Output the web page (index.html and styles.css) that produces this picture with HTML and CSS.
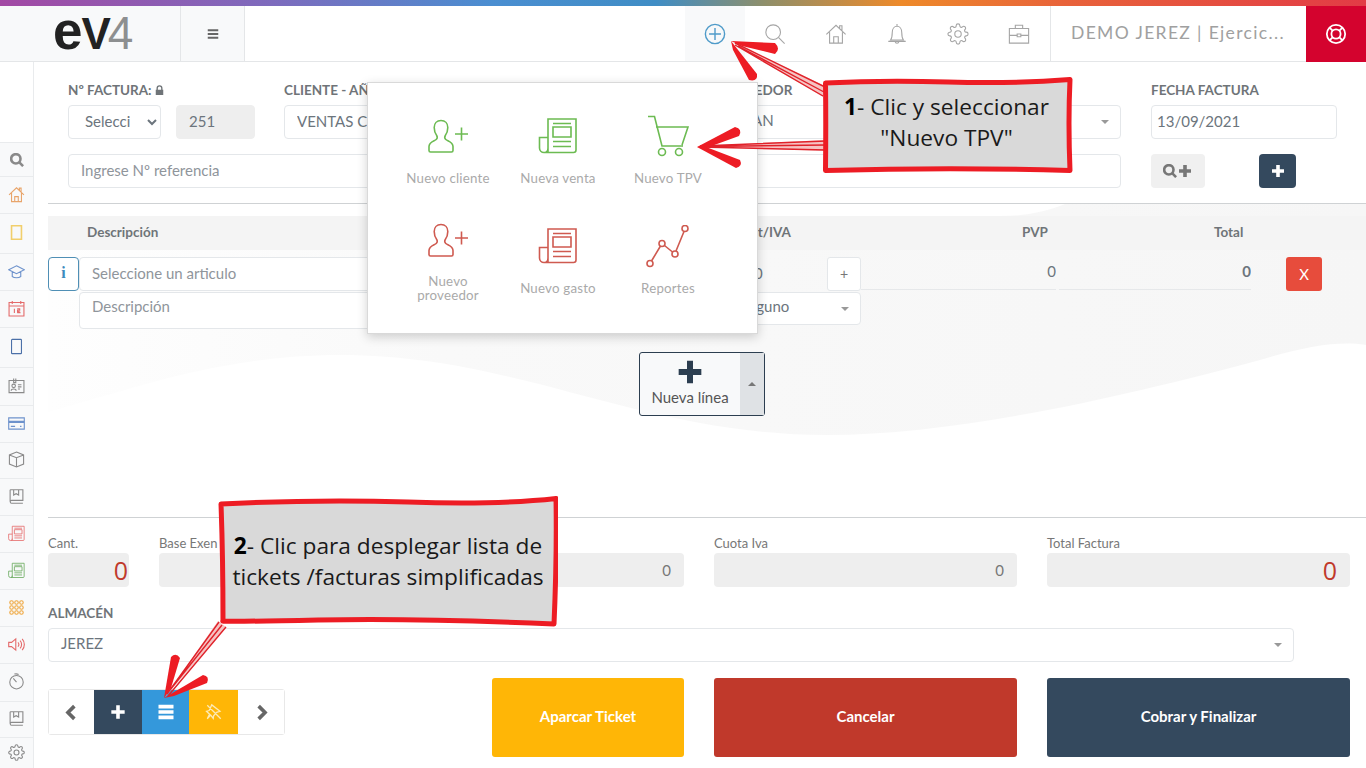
FILE: index.html
```html
<!DOCTYPE html>
<html lang="es">
<head>
    <meta charset="UTF-8">
    <meta name="viewport" content="width=device-width, initial-scale=1.0">
    <title>Nueva factura</title>
    <link rel="stylesheet" href="styles.css">
</head>
<body>
    <svg class="sprite" aria-hidden="true">
        <symbol id="i-search" viewBox="0 0 24 24"><circle cx="10" cy="10" r="8"/><path d="M16 16l6.5 6.5"/></symbol>
        <symbol id="i-home" viewBox="0 0 24 24"><path d="M1.500 12.500L12 2.500l10.500 10M5 10v12h14V10M9.500 22v-7h5v7M16 6V3h2.500v5.500"/></symbol>
        <symbol id="i-bell" viewBox="0 0 24 24"><path d="M12 1v2.500M5 18.500c1.500-2 1.800-4 1.800-8 0-4 2.200-7 5.200-7s5.200 3 5.200 7c0 4 .3 6 1.800 8zM2.500 20h19M10 20.500c.3 2 3.700 2 4 0"/></symbol>
        <symbol id="i-gear" viewBox="0 0 24 24"><circle cx="12" cy="12" r="3.500"/><path d="M19.400 15a1.650 1.650 0 0 0 .33 1.820l.06.06a2 2 0 0 1 0 2.830 2 2 0 0 1-2.830 0l-.06-.06a1.650 1.650 0 0 0-1.820-.33 1.650 1.650 0 0 0-1 1.510V21a2 2 0 0 1-2 2 2 2 0 0 1-2-2v-.09A1.650 1.650 0 0 0 9 19.400a1.650 1.650 0 0 0-1.820.33l-.06.06a2 2 0 0 1-2.830 0 2 2 0 0 1 0-2.830l.06-.06a1.650 1.650 0 0 0 .33-1.820 1.650 1.650 0 0 0-1.510-1H3a2 2 0 0 1-2-2 2 2 0 0 1 2-2h.09A1.650 1.650 0 0 0 4.600 9a1.650 1.650 0 0 0-.33-1.820l-.06-.06a2 2 0 0 1 0-2.830 2 2 0 0 1 2.830 0l.06.06a1.650 1.650 0 0 0 1.820.33H9a1.650 1.650 0 0 0 1-1.510V3a2 2 0 0 1 2-2 2 2 0 0 1 2 2v.09a1.650 1.650 0 0 0 1 1.510 1.650 1.650 0 0 0 1.820-.33l.06-.06a2 2 0 0 1 2.830 0 2 2 0 0 1 0 2.830l-.06.06a1.650 1.650 0 0 0-.33 1.820V9a1.650 1.650 0 0 0 1.510 1H21a2 2 0 0 1 2 2 2 2 0 0 1-2 2h-.09a1.650 1.650 0 0 0-1.510 1z"/></symbol>
        <symbol id="i-case" viewBox="0 0 24 24"><rect x="1.500" y="6" width="21" height="16"/><path d="M8 6V2.500h8V6M1.500 13.500H10M14 13.500h8.500"/><rect x="10" y="12" width="4" height="3"/></symbol>
        <symbol id="i-buoy" viewBox="0 0 24 24"><circle cx="12" cy="12" r="10"/><circle cx="12" cy="12" r="5"/><path d="M5 5l3.500 3.500M19 5l-3.500 3.500M5 19l3.500-3.500M19 19l-3.500-3.500"/></symbol>
        <symbol id="i-add-circle" viewBox="0 0 24 24"><circle cx="12" cy="12" r="10.500"/><path d="M12 5.500v13M5.500 12h13"/></symbol>
        <symbol id="i-plus" viewBox="0 0 24 24"><path d="M12 4v16M4 12h16"/></symbol>
        <symbol id="i-list" viewBox="0 0 24 24"><path d="M3 5.500h18M3 12h18M3 18.500h18"/></symbol>
        <symbol id="i-left" viewBox="0 0 24 24"><path d="M16 3l-9 9 9 9"/></symbol>
        <symbol id="i-right" viewBox="0 0 24 24"><path d="M8 3l9 9-9 9"/></symbol>
        <symbol id="i-pin" viewBox="0 0 24 24"><path d="M3 3l18 18M9 2.500l11 8.500-4.500 1.500-4 4.500-.5 3.500-3.500-4.500-4.500 5 3-6-4-4 3.500-1z"/></symbol>
        <symbol id="i-note" viewBox="0 0 24 24"><rect x="5" y="2.500" width="14" height="19"/></symbol>
        <symbol id="i-cap" viewBox="0 0 24 24"><path d="M12 4L23 9.500 12 15 1 9.500zM6 12v7c3 2.500 9 2.500 12 0v-7"/></symbol>
        <symbol id="i-cal" viewBox="0 0 24 24"><rect x="1.500" y="3.500" width="21" height="19"/><path d="M1.500 8.500h21M6 1.500v4M18 1.500v4M9 12.500v6M13 12.500h3.500v2h-3v2.300c1.500-.8 3.500-.5 3.500 1.200H13"/></symbol>
        <symbol id="i-tablet" viewBox="0 0 24 24"><rect x="5" y="2" width="14" height="20" rx="1"/></symbol>
        <symbol id="i-id" viewBox="0 0 24 24"><rect x="1.500" y="5" width="21" height="17"/><path d="M8 2v6h3V2M14 11h5M14 14h5M14 17h3M4.500 19.500c0-3.500 7-3.500 7 0"/><circle cx="8" cy="12.500" r="2.500"/></symbol>
        <symbol id="i-card" viewBox="0 0 24 24"><rect x="1" y="4" width="22" height="16"/><path d="M1 9h22M1 10.500h22M4 16h6M17 16h2"/></symbol>
        <symbol id="i-box" viewBox="0 0 24 24"><path d="M12 1.500l10 4v13l-10 4-10-4v-13zM2 5.500l10 4 10-4M12 9.500v13"/></symbol>
        <symbol id="i-book" viewBox="0 0 24 24"><path d="M3 2.500h18v15H5c-2.500 0-2.500 4 0 4h16M3 19V2.500M8 2.500V10l3.500-2 3.500 2V2.500"/></symbol>
        <symbol id="i-news" viewBox="0 0 40 38"><path d="M10 35V2h28v31a2.500 2.500 0 0 1-2.500 2.500H6A4.500 4.500 0 0 1 1.500 31V20.500H10M10 31c0 2.500-1.500 4.500-3.500 4.500"/><rect x="15" y="10" width="18" height="10"/><path d="M15 6.500h18M15 24.500h18M15 29.500h18"/></symbol>
        <symbol id="i-dots" viewBox="0 0 24 24"><circle cx="5" cy="5" r="2.500"/><circle cx="12" cy="5" r="2.500"/><circle cx="19" cy="5" r="2.500"/><circle cx="5" cy="12" r="2.500"/><circle cx="12" cy="12" r="2.500"/><circle cx="19" cy="12" r="2.500"/><circle cx="5" cy="19" r="2.500"/><circle cx="12" cy="19" r="2.500"/><circle cx="19" cy="19" r="2.500"/></symbol>
        <symbol id="i-sound" viewBox="0 0 24 24"><path d="M1 9h4l6-5v16l-6-5H1zM14 9a4 4 0 0 1 0 6M17 6.500a8 8 0 0 1 0 11M20 4a12 12 0 0 1 0 16"/></symbol>
        <symbol id="i-timer" viewBox="0 0 24 24"><circle cx="12" cy="13" r="9.500"/><path d="M12 13L7.500 7.500M9 1.500c2-.5 4-.5 6 .5"/></symbol>
        <symbol id="i-user" viewBox="0 0 44 36"><path d="M13 1.500c-4.200 0-6.800 3-6.800 7 0 3 1 6 2.500 8 .7 1.200.6 3-.5 4-1.500 1.500-7.200 2.200-7.200 7v4c0 1 .5 1.500 1.500 1.500h21c1 0 1.500-.5 1.500-1.500v-4c0-4.800-5.700-5.500-7.200-7-1.100-1-1.200-2.800-.5-4 1.500-2 2.500-5 2.500-8 0-4-2.600-7-6.800-7zM33.500 8.500v13M27 15h13"/></symbol>
        <symbol id="i-cart" viewBox="0 0 42 44"><path d="M1 1.500h6.500L15 31h21M9 12h32l-6 18"/><circle cx="15" cy="37" r="3.500"/><circle cx="32" cy="37" r="3.500"/></symbol>
        <symbol id="i-chart" viewBox="0 0 44 44"><circle cx="4" cy="38.500" r="3"/><circle cx="16" cy="18.500" r="3"/><circle cx="29" cy="29" r="3"/><circle cx="39" cy="3.500" r="3"/><path d="M5.500 36l9-15M18.500 20.500l8 6.500M30 26l8-19.500"/></symbol>
    </svg>

    <div class="page">
        <svg class="wave" viewBox="0 0 1366 768" aria-hidden="true">
            <defs>
                <linearGradient id="wave-fade">
                    <stop offset="0" stop-color="#fefefe"/>
                    <stop offset=".3" stop-color="#f9f9f9"/>
                    <stop offset="1" stop-color="#f6f6f6"/>
                </linearGradient>
            </defs>
            <path fill="url(#wave-fade)" d="M48 216H1000C1025 216 1045 212 1065 204H1366V345C1340 341 1310 345 1260 360C1130 395 960 435 827 435C640 435 520 355 340 355C220 355 130 390 48 412Z"/>
        </svg>

        <div class="rainbow"></div>

        <header class="topnav">
            <a class="brand"><span class="logo-e">e</span><span class="logo-v">V</span><span class="logo-4">4</span></a>
            <a class="nav-toggle"><svg class="ic ic-toggle"><use href="#i-list"/></svg></a>
            <div class="nav-spacer"></div>
            <a class="nav-item is-active"><svg class="ic ic-add"><use href="#i-add-circle"/></svg></a>
            <a class="nav-item"><svg class="ic"><use href="#i-search"/></svg></a>
            <a class="nav-item"><svg class="ic"><use href="#i-home"/></svg></a>
            <a class="nav-item"><svg class="ic"><use href="#i-bell"/></svg></a>
            <a class="nav-item"><svg class="ic"><use href="#i-gear"/></svg></a>
            <a class="nav-item"><svg class="ic"><use href="#i-case"/></svg></a>
            <div class="nav-user">DEMO JEREZ | Ejercic...</div>
            <a class="nav-help"><svg class="ic ic-buoy"><use href="#i-buoy"/></svg></a>
        </header>

        <div class="layout">
            <aside class="sidebar">
                <a class="side-item side-search"><svg class="ic ic-solid c-grey"><use href="#i-search"/></svg></a>
                <a class="side-item"><svg class="ic c-orange"><use href="#i-home"/></svg></a>
                <a class="side-item"><svg class="ic c-yellow"><use href="#i-note"/></svg></a>
                <a class="side-item"><svg class="ic c-blue"><use href="#i-cap"/></svg></a>
                <a class="side-item"><svg class="ic c-red"><use href="#i-cal"/></svg></a>
                <a class="side-item"><svg class="ic c-navy"><use href="#i-tablet"/></svg></a>
                <a class="side-item"><svg class="ic c-grey"><use href="#i-id"/></svg></a>
                <a class="side-item"><svg class="ic c-blue"><use href="#i-card"/></svg></a>
                <a class="side-item"><svg class="ic c-grey"><use href="#i-box"/></svg></a>
                <a class="side-item"><svg class="ic c-grey"><use href="#i-book"/></svg></a>
                <a class="side-item"><svg class="ic ic-fine c-red"><use href="#i-news"/></svg></a>
                <a class="side-item"><svg class="ic ic-fine c-green"><use href="#i-news"/></svg></a>
                <a class="side-item"><svg class="ic c-amber"><use href="#i-dots"/></svg></a>
                <a class="side-item"><svg class="ic c-red"><use href="#i-sound"/></svg></a>
                <a class="side-item"><svg class="ic c-grey"><use href="#i-timer"/></svg></a>
                <a class="side-item"><svg class="ic c-grey"><use href="#i-book"/></svg></a>
                <a class="side-item"><svg class="ic c-grey"><use href="#i-gear"/></svg></a>
            </aside>

            <main class="content">
                <section class="invoice-head">
                    <div class="col">
                        <label class="field-label">Nº FACTURA: <svg class="lock" viewBox="0 0 12 13"><path d="M2 6V4a4 4 0 0 1 8 0v2h1v7H1V6zm1.800 0h4.400V4a2.200 2.200 0 0 0-4.400 0z"/></svg></label>
                        <div class="factura-inputs">
                            <select class="form-control serie"><option>Seleccione</option></select>
                            <input class="form-control numero" value="251" disabled>
                        </div>
                    </div>
                    <div class="col">
                        <label class="field-label">CLIENTE - AÑADIR</label>
                        <input class="form-control" value="VENTAS CONTADO">
                    </div>
                    <div class="col">
                        <label class="field-label label-seller">VENDEDOR</label>
                        <div class="form-control select2">JUAN<span class="caret"></span></div>
                    </div>
                    <div class="col col-last">
                        <label class="field-label">FECHA FACTURA</label>
                        <input class="form-control date" value="13/09/2021">
                    </div>
                    <div class="col col-wide">
                        <input class="form-control" placeholder="Ingrese Nº referencia">
                    </div>
                    <div class="col col-last head-actions">
                        <button class="btn btn-light"><svg class="ic ic-solid ic-q"><use href="#i-search"/></svg><svg class="ic ic-thick ic-p"><use href="#i-plus"/></svg></button>
                        <button class="btn btn-dark"><svg class="ic ic-thick"><use href="#i-plus"/></svg></button>
                    </div>
                </section>

                <section class="lines">
                    <div class="lines-head">
                        <span class="th-desc">Descripción</span>
                        <span class="th-iva">Dct/IVA</span>
                        <span class="th-pvp">PVP</span>
                        <span class="th-total">Total</span>
                    </div>
                    <div class="line-row">
                        <button class="btn-info">i</button>
                        <div class="line-desc">
                            <input class="form-control" placeholder="Seleccione un articulo">
                            <input class="form-control desc-text" placeholder="Descripción">
                        </div>
                        <div class="line-iva">
                            <div class="iva-top">
                                <input class="form-control" value="0">
                                <button class="btn-plus">+</button>
                            </div>
                            <div class="form-control select2 iva-select">Ninguno<span class="caret"></span></div>
                        </div>
                        <input class="under-input line-pvp" value="0">
                        <input class="under-input line-total" value="0">
                        <button class="btn-remove">X</button>
                    </div>
                    <div class="add-line">
                        <button class="btn-add">
                            <span class="add-main"><svg class="ic ic-add-line"><use href="#i-plus"/></svg>Nueva línea</span>
                            <span class="add-drop"><span class="caret-up"></span></span>
                        </button>
                    </div>
                </section>

                <section class="totals">
                    <div class="totals-grid">
                        <div class="totals-first">
                            <div>
                                <label class="small-label">Cant.</label>
                                <div class="total-box is-big is-tight">0</div>
                            </div>
                            <div>
                                <label class="small-label">Base Exen</label>
                                <div class="total-box"></div>
                            </div>
                        </div>
                        <div>
                            <label class="small-label"></label>
                            <div class="total-box">0</div>
                        </div>
                        <div>
                            <label class="small-label">Cuota Iva</label>
                            <div class="total-box">0</div>
                        </div>
                        <div>
                            <label class="small-label">Total Factura</label>
                            <div class="total-box is-big">0</div>
                        </div>
                    </div>
                    <label class="field-label almacen-label">ALMACÉN</label>
                    <div class="form-control select2 almacen">JEREZ<span class="caret"></span></div>
                    <div class="totals-grid actions">
                        <div class="ticket-nav">
                            <button class="tn-btn tn-prev"><svg class="ic ic-thick"><use href="#i-left"/></svg></button>
                            <button class="tn-btn tn-dark"><svg class="ic ic-thick"><use href="#i-plus"/></svg></button>
                            <button class="tn-btn tn-blue"><svg class="ic ic-thick"><use href="#i-list"/></svg></button>
                            <button class="tn-btn tn-amber"><svg class="ic ic-pin"><use href="#i-pin"/></svg></button>
                            <button class="tn-btn tn-next"><svg class="ic ic-thick"><use href="#i-right"/></svg></button>
                        </div>
                        <button class="btn-big big-amber">Aparcar Ticket</button>
                        <button class="btn-big big-red">Cancelar</button>
                        <button class="btn-big big-navy">Cobrar y Finalizar</button>
                    </div>
                </section>
            </main>
        </div>

        <!-- quick menu open under the + button -->
        <div class="quick-menu">
            <a class="quick-item c-ok"><svg class="quick-ic ic-user"><use href="#i-user"/></svg><span>Nuevo cliente</span></a>
            <a class="quick-item c-ok"><svg class="quick-ic ic-news"><use href="#i-news"/></svg><span>Nueva venta</span></a>
            <a class="quick-item c-ok"><svg class="quick-ic ic-cart"><use href="#i-cart"/></svg><span>Nuevo TPV</span></a>
            <a class="quick-item c-bad"><svg class="quick-ic ic-user"><use href="#i-user"/></svg><span class="two-lines">Nuevo proveedor</span></a>
            <a class="quick-item c-bad"><svg class="quick-ic ic-news"><use href="#i-news"/></svg><span>Nuevo gasto</span></a>
            <a class="quick-item c-bad"><svg class="quick-ic ic-chart"><use href="#i-chart"/></svg><span>Reportes</span></a>
        </div>

        <!-- tutorial notes drawn on top of the screenshot -->
        <svg class="arrows" viewBox="0 0 1366 768" aria-hidden="true">
            <g class="arrow-pale">
                <path d="M825 86L732 42 823 97Z"/>
                <path d="M826 140L698 146 826 151Z"/>
                <path d="M218 621L165 697 226 627Z"/>
            </g>
            <g class="arrow-lines">
                <path d="M825 87L735 43M823 96L735 45M824 92L738 46"/>
                <path d="M826 141L700 146M826 150L700 147M826 145L705 146.500"/>
                <path d="M219 622L167 694M226 627L168 696M222 625L170 690"/>
            </g>
            <g class="arrow-fill">
                <path d="M731 41L775 43Q781 49 775 54L742 46Z"/>
                <path d="M731 41L757 74Q758 82 749 80L733 50Z"/>
                <path d="M697 147L735 127Q743 129 739 136L706 148Z"/>
                <path d="M697 147L706 147L740 160Q743 166 736 168Z"/>
                <path d="M164 698L171 657Q176 652 180 658L171 688Z"/>
                <path d="M164 698L203 675Q210 676 207 683L174 696Z"/>
            </g>
        </svg>

        <div class="callout callout-one">
            <svg class="callout-bg" viewBox="0 0 250 96" preserveAspectRatio="none"><path d="M2.500 6Q60 3 125 5T247 2.500Q245 45 247 93.500Q130 90 2.500 93.500Q3 45 2.500 6Z"/></svg>
            <p><b>1</b>- Clic y seleccionar<br>"Nuevo TPV"</p>
        </div>
        <div class="callout callout-two">
            <svg class="callout-bg" viewBox="0 0 340 131" preserveAspectRatio="none"><path d="M3 8Q100 3 190 6T338 2.500Q339 60 336 128Q200 122 100 124T5 125Q5 60 3 8Z"/></svg>
            <p><b>2</b>- Clic para desplegar lista de<br>tickets /facturas simplificadas</p>
        </div>
    </div>
</body>
</html>
```

FILE: styles.css
```css
* {
    box-sizing: border-box;
}
html, body {
    margin: 0;
    height: 768px;
    overflow: hidden;
}
body {
    font-family: Lato, "Open Sans", sans-serif;
    font-size: 15px;
    color: #6c757d;
    background: #fff;
}
.sprite {
    display: none;
}
symbol * {
    vector-effect: non-scaling-stroke;
}
.ic {
    width: 20px;
    height: 20px;
    fill: none;
    stroke: currentColor;
    stroke-width: 1.1;
    display: block;
}
.ic-solid {
    stroke-width: 2.6;
}
.ic-thick {
    stroke-width: 3.6;
}
.ic-fine {
    stroke-width: .8;
}
.page {
    position: relative;
    width: 1366px;
    height: 768px;
    overflow: hidden;
}
.wave {
    position: absolute;
    left: 0;
    top: 0;
    width: 1366px;
    height: 768px;
}

/* top */
.rainbow {
    position: relative;
    height: 6px;
    background: linear-gradient(to right, #a349a4 0%, #7d6bbd 20%, #4a8ed1 36%, #3f8dc5 48%, #8f8f6a 56%, #ee8a2a 66%, #e8623a 78%, #e23b46 100%);
}
.topnav {
    position: relative;
    display: flex;
    height: 56px;
    background: #fff;
    border-bottom: 1px solid #e4e6e8;
}
.brand {
    width: 180px;
    background: #f8f9fa;
    padding: 0 0 0 53px;
    font-family: "Liberation Sans", Arial, sans-serif;
    line-height: 50px;
    white-space: nowrap;
}
.logo-e {
    color: #222;
    font-weight: 700;
    font-size: 53px;
    letter-spacing: -1px;
}
.logo-v {
    color: #222;
    font-weight: 700;
    font-size: 44px;
    letter-spacing: -3px;
}
.logo-4 {
    color: #8d8f90;
    font-size: 46px;
}
.nav-toggle {
    width: 65px;
    display: flex;
    align-items: center;
    justify-content: center;
    background: #f8f9fa;
    border-left: 1px solid #e4e6e8;
    border-right: 1px solid #e4e6e8;
    color: #666;
}
.ic-toggle {
    width: 14px;
    height: 14px;
    stroke-width: 2;
}
.nav-spacer {
    flex: 1;
}
.nav-item {
    width: 61px;
    padding-right: 1px;
    display: flex;
    align-items: center;
    justify-content: center;
    color: #a5a5a5;
}
.nav-item .ic {
    width: 22px;
    height: 22px;
}
.nav-item.is-active {
    width: 60px;
    background: #f8f9fa;
    color: #4f9bc9;
}
.nav-item .ic-add {
    stroke-width: 1.4;
}
.nav-user {
    width: 256px;
    border-left: 1px solid #e4e6e8;
    padding-left: 20px;
    font-size: 17.500px;
    line-height: 54px;
    letter-spacing: 1.350px;
    color: #a0a0a0;
    white-space: nowrap;
}
.nav-help {
    width: 60px;
    margin-bottom: -1px;
    display: flex;
    align-items: center;
    justify-content: center;
    background: #d4032e;
    color: #fff;
}
.ic-buoy {
    width: 22px;
    height: 22px;
    stroke-width: 1.8;
}

/* left menu */
.layout {
    position: relative;
    display: flex;
    height: 706px;
}
.sidebar {
    width: 34px;
    flex: none;
    border-right: 1px solid #e9ebed;
    padding-top: 80px;
    display: grid;
    grid-template-rows: 34px 37px 40px 37px 37px 40px 38px 37px 36px 37px 37px 37px 37px 37px 38px 36px 31px;
}
.side-item {
    display: flex;
    align-items: center;
    justify-content: center;
    padding-bottom: 2px;
    background: #f8f9fa;
    border-top: 1px solid #e9ebed;
}
.side-item .ic {
    width: 17px;
    height: 17px;
}
.side-search {
    padding: 0;
}
.side-item .ic-solid {
    width: 14px;
    height: 14px;
}
.side-item .c-yellow {
    stroke-width: 1.6;
}
.c-grey { color: #8a8a8a; }
.c-orange { color: #e8a56b; }
.c-yellow { color: #f1cf6c; }
.c-blue { color: #6d92cc; }
.c-red { color: #e46a6a; }
.c-navy { color: #4b70a8; }
.c-green { color: #67a85a; }
.c-amber { color: #efa63c; }

/* main */
.content {
    flex: 1;
    padding-left: 14px;
}
.invoice-head {
    display: grid;
    grid-template-columns: 216px 438px 429px 186px;
    row-gap: 15px;
    margin-left: 20px;
    padding-top: 21px;
}
.col {
    padding-right: 30px;
    min-width: 0;
}
.col-last {
    padding-right: 0;
}
.col-wide {
    grid-column: span 3;
}
.field-label {
    display: block;
    height: 22px;
    font-size: 13.500px;
    line-height: 15px;
    font-weight: 700;
    color: #6f7478;
}
.label-seller {
    margin-left: -5px;
}
.lock {
    width: 9px;
    height: 10px;
    fill: #6f7478;
}
.form-control {
    display: block;
    width: 100%;
    height: 34px;
    padding: 0 12px 2px;
    font-family: inherit;
    font-size: 15px;
    line-height: 28px;
    color: #6c757d;
    background: #fff;
    border: 1px solid #e4e7ea;
    border-radius: 4px;
    outline: none;
}
.form-control::placeholder {
    color: #8f959b;
    opacity: 1;
}
.factura-inputs {
    display: flex;
    gap: 15px;
}
.serie {
    width: 93px;
    flex: none;
    padding: 0 14px 2px 12px;
}
.numero {
    width: 79px;
    flex: none;
    background: #eee;
    border-color: #eee;
}
.date {
    padding: 0 5px 2px;
}
.select2 {
    position: relative;
}
.caret {
    position: absolute;
    right: 11px;
    top: 14px;
    border: 4px solid transparent;
    border-top-color: #999;
    border-bottom: 0;
}
.head-actions {
    display: flex;
}
.btn {
    height: 34px;
    padding: 0;
    border: 0;
    border-radius: 4px;
    display: flex;
    align-items: center;
    justify-content: center;
}
.btn-light {
    width: 54px;
    margin-right: 54px;
    background: #f0f0f0;
    color: #777;
}
.btn-light .ic-q {
    width: 14px;
    height: 14px;
}
.btn-light .ic-p {
    width: 18px;
    height: 18px;
    margin-left: -1px;
}
.btn-dark {
    width: 37px;
    background: #34495e;
    color: #fff;
}
.btn-dark .ic {
    width: 18px;
    height: 18px;
}

/* invoice lines */
.lines {
    position: relative;
    margin-top: 15px;
    border-top: 1px solid #cfd2d4;
    padding-top: 12px;
}
.lines-head {
    position: relative;
    height: 34px;
    background: #f4f4f4;
    font-size: 13.500px;
    font-weight: 700;
    line-height: 32px;
    color: #6f7478;
}
.lines-head span {
    position: absolute;
    top: 0;
}
.th-desc { left: 39px; }
.th-iva { left: 693px; }
.th-pvp { left: 974px; }
.th-total { left: 1166px; }
.line-row {
    display: flex;
    margin-top: 7px;
    align-items: flex-start;
}
.btn-info {
    width: 31px;
    height: 34px;
    flex: none;
    padding: 0 0 2px;
    background: #fff;
    border: 1px solid #4f8fb5;
    border-radius: 4px;
    color: #3d8bbd;
    font-family: "Liberation Serif", serif;
    font-weight: 700;
    font-size: 16px;
}
.line-desc {
    width: 621px;
    flex: none;
    margin-right: 20px;
}
.desc-text {
    height: 37px;
    margin-top: 1px;
    line-height: 26px;
    padding-bottom: 9px;
}
.line-iva {
    width: 141px;
    flex: none;
}
.iva-top {
    display: flex;
    height: 34px;
}
.iva-top .form-control {
    width: 107px;
    background: transparent;
    border-color: transparent;
    padding-left: 33px;
}
.btn-plus {
    width: 34px;
    height: 34px;
    padding: 0;
    background: #fff;
    border: 1px solid #e4e7ea;
    border-radius: 3px;
    font-size: 14px;
    color: #777;
}
.iva-select {
    height: 33px;
    margin-top: 1px;
    line-height: 26px;
}
.under-input {
    width: 192px;
    height: 33px;
    flex: none;
    padding: 0 0 4px;
    background: transparent;
    border: 0;
    border-bottom: 1px solid #e6e8ea;
    font-family: inherit;
    font-size: 15px;
    color: #6c757d;
    text-align: right;
    outline: none;
}
.line-pvp {
    width: 195px;
    margin-right: 3px;
}
.line-total {
    padding-right: 0;
    font-weight: 700;
}
.btn-remove {
    width: 36px;
    height: 34px;
    margin-left: 35px;
    padding: 0;
    background: #e74c3c;
    border: 0;
    border-radius: 3px;
    color: #fff;
    font-family: inherit;
    font-size: 15px;
}
.add-line {
    display: flex;
    justify-content: center;
    margin-top: 23px;
    padding-right: 10px;
}
.btn-add {
    display: flex;
    width: 126px;
    height: 64px;
    padding: 0;
    background: #f8f9fa;
    border: 1px solid #2c3e50;
    border-radius: 3px;
    font-family: inherit;
    font-size: 15px;
    line-height: 17px;
    color: #555;
}
.add-main {
    flex: 1;
    display: flex;
    flex-direction: column;
    align-items: center;
    padding-top: 2px;
}
.ic-add-line {
    width: 34px;
    height: 34px;
    stroke-width: 6;
    color: #2c3e50;
}
.add-drop {
    width: 24px;
    background: #dfe2e5;
    display: flex;
    align-items: center;
    justify-content: center;
}
.caret-up {
    border: 4px solid transparent;
    border-bottom-color: #777;
    border-top: 0;
}

/* totals */
.totals {
    margin-top: 101px;
    border-top: 1px solid #cfd2d4;
    padding: 18px 16px 0 0;
}
.totals-grid {
    display: grid;
    grid-template-columns: 414px 192px 303px 303px;
    column-gap: 30px;
}
.totals-first {
    display: grid;
    grid-template-columns: 81px 303px;
    column-gap: 30px;
}
.small-label {
    display: block;
    height: 17px;
    font-size: 13px;
    line-height: 15px;
    color: #777;
}
.total-box {
    height: 34px;
    padding: 0 13px;
    background: #eee;
    border-radius: 4px;
    font-size: 15px;
    line-height: 34px;
    color: #777;
    text-align: right;
}
.total-box.is-big {
    font-family: "Open Sans", sans-serif;
    font-size: 25px;
    color: #c0392b;
}
.total-box.is-tight {
    padding-right: 1px;
}
.almacen-label {
    margin-top: 19px;
    height: 22px;
}
.almacen {
    width: 1246px;
}
.actions {
    margin-top: 16px;
    align-items: start;
}
.ticket-nav {
    display: flex;
    width: 237px;
    height: 46px;
    margin-top: 11px;
    border: 1px solid #e8e8e8;
    border-radius: 3px;
}
.tn-btn {
    padding: 0;
    display: flex;
    align-items: center;
    justify-content: center;
    background: #fff;
    border: 0;
    color: #666;
}
.tn-btn .ic {
    width: 17px;
    height: 17px;
}
.tn-dark .ic, .tn-blue .ic {
    width: 20px;
    height: 20px;
}
.tn-prev { flex: 0 0 45px; }
.tn-dark { flex: 0 0 48px; background: #34495e; color: #fff; }
.tn-blue { flex: 0 0 47px; background: #3498db; color: #fff; }
.tn-amber { flex: 0 0 49px; background: #ffb606; color: #fff; }
.tn-next { flex: 0 0 46px; }
.tn-btn .ic-pin {
    width: 18px;
    height: 18px;
    stroke-width: 1.3;
    color: #fdeab5;
}
.btn-big {
    height: 79px;
    padding: 0 0 3px;
    border: 0;
    border-radius: 3px;
    color: #fff;
    font-family: inherit;
    font-size: 15px;
    font-weight: 700;
}
.big-amber { background: #ffb606; }
.big-red { background: #c0392b; }
.big-navy { background: #34495e; }

/* overlays */
.quick-menu {
    position: absolute;
    left: 367px;
    top: 82px;
    width: 391px;
    height: 252px;
    padding: 25px 25px 0 25px;
    display: grid;
    grid-template-columns: repeat(3, 110px);
    grid-template-rows: 110px 110px;
    background: #fff;
    border: 1px solid #d9d9d9;
    box-shadow: 0 3px 10px rgba(0, 0, 0, .18);
}
.quick-item {
    display: flex;
    flex-direction: column;
    align-items: center;
    font-size: 13.300px;
    line-height: 14px;
    color: #aaa;
    text-align: center;
    letter-spacing: .2px;
}
.quick-ic {
    fill: none;
    stroke: currentColor;
    stroke-width: 1.600;
    flex: none;
}
.ic-user { width: 44px; height: 38px; margin: 10px 0 15px 4px; }
.c-bad .ic-user { margin: 4px 0 21px 4px; }
.ic-news { width: 40px; height: 38px; margin: 9px 0 16px; }
.ic-cart { width: 42px; height: 44px; margin: 7px 0 12px; }
.ic-chart { width: 44px; height: 44px; margin: 7px 0 12px; }
.c-ok svg { color: #6cbb52; }
.c-bad svg { color: #cf5a50; }
.two-lines {
    width: 70px;
    margin-top: -7px;
}
.arrows {
    position: absolute;
    left: 0;
    top: 0;
    width: 1366px;
    height: 768px;
    pointer-events: none;
}
.arrow-pale {
    fill: #f6c3c3;
}
.arrow-lines {
    fill: none;
    stroke: #e0222a;
    stroke-width: 1.400;
}
.arrow-fill {
    fill: #ed1c24;
}
.callout {
    position: absolute;
    display: flex;
    align-items: center;
    justify-content: center;
    color: #1a1a1a;
    font-family: "Open Sans", sans-serif;
    font-size: 22.700px;
    line-height: 31px;
    text-align: center;
}
.callout p {
    position: relative;
    margin: 0;
}
.callout b {
    font-weight: 700;
    color: #000;
}
.callout-one {
    left: 823px;
    top: 77px;
    width: 250px;
    height: 96px;
    padding: 0 3px 7px 0;
}
.callout-two {
    left: 218px;
    top: 496px;
    width: 340px;
    height: 131px;
    padding-bottom: 2px;
}
.callout-bg {
    position: absolute;
    left: 0;
    top: 0;
    width: 100%;
    height: 100%;
    fill: #d9d9d9;
    stroke: #ed1c24;
    stroke-width: 5;
    stroke-linejoin: round;
}
```
